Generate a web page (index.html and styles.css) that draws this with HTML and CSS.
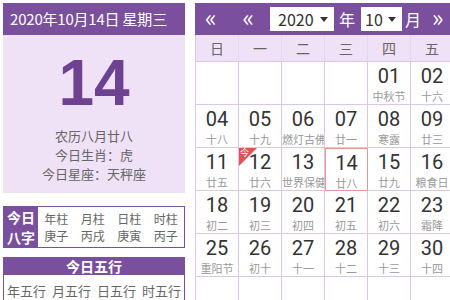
FILE: index.html
```html
<!DOCTYPE html>
<html lang="zh-CN">
<head>
    <meta charset="UTF-8">
    <title>万年历</title>
    <link rel="stylesheet" href="styles.css">
</head>
<body>
<div class="page">
    <div class="side">
        <div class="side-head">2020年10月14日 星期三</div>
        <div class="today-box">
            <div class="big-day">14</div>
            <p>农历八月廿八</p>
            <p>今日生肖：虎</p>
            <p>今日星座：天秤座</p>
        </div>

        <div class="bazi">
            <div class="bazi-title"><span>今日</span><span>八字</span></div>
            <div class="bazi-col"><span>年柱</span><span>庚子</span></div>
            <div class="bazi-col"><span>月柱</span><span>丙戌</span></div>
            <div class="bazi-col"><span>日柱</span><span>庚寅</span></div>
            <div class="bazi-col"><span>时柱</span><span>丙子</span></div>
        </div>

        <div class="wuxing">
            <div class="wuxing-title">今日五行</div>
            <div class="wuxing-row">
                <span>年五行</span><span>月五行</span><span>日五行</span><span>时五行</span>
            </div>
        </div>
    </div>

    <div class="cal">
        <div class="cal-head">
            <a class="nav">&laquo;</a>
            <a class="nav">&laquo;</a>
            <div class="pick year">2020 <i></i></div>
            <span class="unit">年</span>
            <div class="pick month">10 <i></i></div>
            <span class="unit">月</span>
            <a class="nav">&raquo;</a>
        </div>
        <div class="week">
            <div>日</div><div>一</div><div>二</div><div>三</div><div>四</div><div>五</div><div>六</div>
        </div>
        <div class="days">
            <div class="cell"></div>
            <div class="cell"></div>
            <div class="cell"></div>
            <div class="cell"></div>
            <div class="cell"><b>01</b><small>中秋节</small></div>
            <div class="cell"><b>02</b><small>十六</small></div>
            <div class="cell"><b>03</b><small>十七</small></div>

            <div class="cell"><b>04</b><small>十八</small></div>
            <div class="cell"><b>05</b><small>十九</small></div>
            <div class="cell"><b>06</b><small>燃灯古佛</small></div>
            <div class="cell"><b>07</b><small>廿一</small></div>
            <div class="cell"><b>08</b><small>寒露</small></div>
            <div class="cell"><b>09</b><small>廿三</small></div>
            <div class="cell"><b>10</b><small>廿四</small></div>

            <div class="cell"><b>11</b><small>廿五</small></div>
            <div class="cell"><div class="tag">今</div><b>12</b><small>廿六</small></div>
            <div class="cell"><b>13</b><small>世界保健</small></div>
            <div class="cell current"><b>14</b><small>廿八</small></div>
            <div class="cell"><b>15</b><small>廿九</small></div>
            <div class="cell"><b>16</b><small>粮食日</small></div>
            <div class="cell"><b>17</b><small>初一</small></div>

            <div class="cell"><b>18</b><small>初二</small></div>
            <div class="cell"><b>19</b><small>初三</small></div>
            <div class="cell"><b>20</b><small>初四</small></div>
            <div class="cell"><b>21</b><small>初五</small></div>
            <div class="cell"><b>22</b><small>初六</small></div>
            <div class="cell"><b>23</b><small>霜降</small></div>
            <div class="cell"><b>24</b><small>初八</small></div>

            <div class="cell"><b>25</b><small>重阳节</small></div>
            <div class="cell"><b>26</b><small>初十</small></div>
            <div class="cell"><b>27</b><small>十一</small></div>
            <div class="cell"><b>28</b><small>十二</small></div>
            <div class="cell"><b>29</b><small>十三</small></div>
            <div class="cell"><b>30</b><small>十四</small></div>
            <div class="cell"><b>31</b><small>十五</small></div>

            <div class="cell"></div>
            <div class="cell"></div>
            <div class="cell"></div>
            <div class="cell"></div>
            <div class="cell"></div>
            <div class="cell"></div>
            <div class="cell"></div>
        </div>
    </div>
</div>
</body>
</html>
```

FILE: styles.css
```css
body {
    margin: 0;
    font-family: "Noto Sans CJK SC", "Noto Sans", sans-serif;
    background-color: #fff;
    overflow: hidden;
    width: 450px;
    height: 300px;
}

.page {
    display: flex;
    padding: 3px 0 0 3px;
    gap: 10px;
}

/* left column */
.side {
    width: 182px;
    flex-shrink: 0;
}

.side-head {
    height: 32px;
    line-height: 32px;
    background-color: #7a4f9d;
    color: #fff;
    font-size: 15px;
    padding-left: 7px;
    white-space: nowrap;
    letter-spacing: -0.2px;
}

.today-box {
    height: 158px;
    background-color: #efe2f6;
    text-align: center;
    color: #666;
    font-size: 13px;
}

.big-day {
    font-family: "Liberation Sans", Arial, sans-serif;
    font-weight: bold;
    font-size: 64px;
    line-height: 64px;
    color: #6f4191;
    padding-top: 16px;
    height: 75px;
}

.today-box p {
    margin: 0;
    line-height: 19px;
}

.bazi {
    display: flex;
    margin-top: 13px;
    height: 42px;
    box-sizing: border-box;
    border: 1px solid #7a4f9d;
}

.bazi-title {
    width: 34px;
    background-color: #7a4f9d;
    color: #fff;
    font-weight: bold;
    font-size: 14px;
    line-height: 20px;
    display: flex;
    flex-direction: column;
    align-items: center;
}

.bazi-col {
    flex: 1;
    display: flex;
    flex-direction: column;
    align-items: center;
    justify-content: center;
    color: #666;
    font-size: 12px;
    line-height: 17.5px;
}

.wuxing {
    margin-top: 9px;
}

.wuxing-title {
    height: 18px;
    line-height: 18px;
    background-color: #7a4f9d;
    color: #fff;
    font-weight: bold;
    font-size: 14px;
    text-align: center;
}

.wuxing-row {
    display: flex;
    justify-content: space-around;
    border-left: 1px solid #7a4f9d;
    border-right: 1px solid #7a4f9d;
    height: 40px;
    line-height: 32px;
    color: #666;
    font-size: 13px;
}

/* calendar */
.cal {
    width: 302px;
    flex-shrink: 0;
}

.cal-head {
    height: 32px;
    background-color: #7a4f9d;
    display: flex;
    align-items: center;
    color: #fff;
}

.nav {
    font-size: 24px;
    line-height: 24px;
    color: #fff;
    padding-bottom: 4px;
}

.nav:first-child {
    margin-left: 10px;
}

.nav:nth-child(2) {
    margin-left: 26px;
}

.pick {
    background-color: #fff;
    color: #333;
    height: 24px;
    line-height: 24px;
    font-size: 16px;
    padding-left: 8px;
    box-sizing: border-box;
    display: flex;
    align-items: center;
}

.pick i {
    display: inline-block;
    width: 0;
    height: 0;
    border-left: 4px solid transparent;
    border-right: 4px solid transparent;
    border-top: 5px solid #333;
    margin-left: auto;
    margin-right: 6px;
}

.year {
    width: 64px;
    margin-left: 16px;
}

.month {
    width: 41px;
    margin-left: 6px;
    padding-left: 4px;
}

.unit {
    font-size: 16px;
    margin-left: 5px;
}

.month + .unit {
    margin-left: 3px;
}

.nav:last-child {
    margin-left: 11px;
}

.week {
    display: grid;
    grid-template-columns: repeat(7, 43px);
    height: 27px;
    background-color: #efe2f6;
    border-left: 1px solid #dcc6e8;
    border-bottom: 1px solid #dcc6e8;
    box-sizing: border-box;
}

.week div {
    text-align: center;
    line-height: 26px;
    color: #666;
    font-size: 14px;
    border-right: 1px solid #e6d6ee;
}

.days {
    display: grid;
    grid-template-columns: repeat(7, 43px);
    grid-auto-rows: 43px;
    border-left: 1px solid #dcc6e8;
}

.cell {
    position: relative;
    box-sizing: border-box;
    border-right: 1px solid #dcc6e8;
    border-bottom: 1px solid #dcc6e8;
    text-align: center;
    overflow: hidden;
}

.cell b {
    display: block;
    font-weight: normal;
    font-size: 20px;
    line-height: 24px;
    padding-top: 2px;
    color: #333;
    font-family: Roboto, "Noto Sans", sans-serif;
}

.cell small {
    display: block;
    font-size: 11px;
    line-height: 16px;
    color: #999;
    white-space: nowrap;
}

.current {
    border: 1px solid #e79595;
}

.tag {
    position: absolute;
    left: 0;
    top: 0;
    width: 18px;
    height: 18px;
    background-color: #e2505a;
    clip-path: polygon(0 0, 100% 0, 0 100%);
    color: #fff;
    font-size: 9px;
    line-height: 10px;
    text-align: left;
    padding-left: 1px;
    box-sizing: border-box;
}
```
